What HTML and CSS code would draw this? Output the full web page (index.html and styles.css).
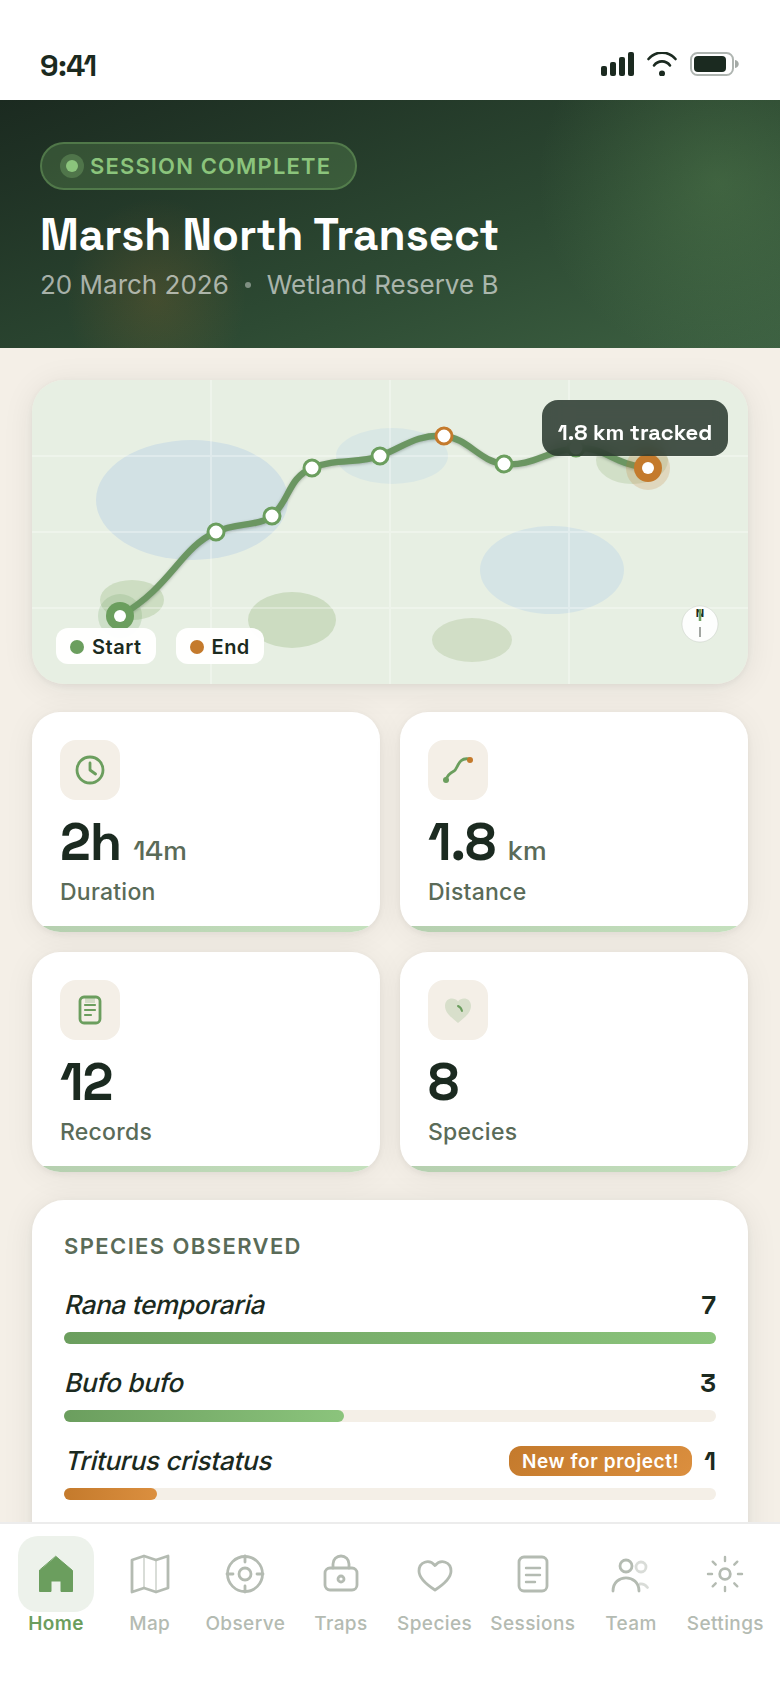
FILE: index.html
```html
<!DOCTYPE html>
<html lang="en">
<head>
    <meta charset="UTF-8">
    <meta name="viewport" content="width=device-width, initial-scale=1.0">
    <title>Marsh North Transect</title>
    <link rel="stylesheet" href="styles.css">
</head>
<body>
    <div class="phone">
        <div class="status-bar">
            <span class="time">9:41</span>
            <div class="status-icons">
                <svg width="33" height="24" viewBox="0 0 33 24" fill="#1b2a20">
                    <rect x="0" y="14" width="6" height="10" rx="2"/>
                    <rect x="9" y="10" width="6" height="14" rx="2"/>
                    <rect x="18" y="5" width="6" height="19" rx="2"/>
                    <rect x="27" y="0" width="6" height="24" rx="2"/>
                </svg>
                <svg width="30" height="24" viewBox="0 0 30 24" fill="none" stroke="#1b2a20" stroke-width="2.6" stroke-linecap="round">
                    <path d="M1.500 7C9-1.500 21-1.500 28.500 7"/>
                    <path d="M7 13.500C11 8 19 8 23 13.500"/>
                    <circle cx="15" cy="21.500" r="3" fill="#1b2a20" stroke="none"/>
                </svg>
                <svg width="50" height="24" viewBox="0 0 50 24">
                    <rect x="1" y="1" width="42" height="22" rx="6.500" fill="none" stroke="#1b2a20" stroke-opacity=".35" stroke-width="2"/>
                    <rect x="4" y="4" width="32" height="16" rx="4" fill="#1b2a20"/>
                    <path d="M45 8C50 9 50 15 45 16Z" fill="#1b2a20" fill-opacity=".4"/>
                </svg>
            </div>
        </div>

        <header class="hero">
            <div class="badge"><span class="badge-dot"></span>SESSION COMPLETE</div>
            <h1>Marsh North Transect</h1>
            <div class="meta"><span>20 March 2026</span><span class="meta-dot"></span><span>Wetland Reserve B</span></div>
        </header>

        <main class="content">
            <section class="map-card">
                <svg class="map" width="716" height="304" viewBox="0 0 716 304">
                    <rect width="716" height="304" fill="#e7efe3"/>
                    <ellipse cx="160" cy="120" rx="96" ry="60" fill="#d2e1e4"/>
                    <ellipse cx="520" cy="190" rx="72" ry="44" fill="#d5e4e5"/>
                    <ellipse cx="360" cy="76" rx="56" ry="28" fill="#d9e7e4"/>
                    <ellipse cx="100" cy="220" rx="32" ry="20" fill="#cdddc2"/>
                    <ellipse cx="260" cy="240" rx="44" ry="28" fill="#ccdcc1"/>
                    <ellipse cx="600" cy="80" rx="36" ry="24" fill="#d1dfc7"/>
                    <ellipse cx="440" cy="260" rx="40" ry="22" fill="#d1dec6"/>
                    <path d="M0 76H716M0 152H716M0 228H716M179 0V304M358 0V304M537 0V304" stroke="#fff" stroke-opacity=".3" stroke-width="2"/>
                    <path class="track" d="M88 236C140 206 148 168 184 152C204 142 226 147 240 136C258 120 256 98 280 88C304 78 326 84 348 76C370 68 384 54 412 56C436 58 448 82 472 84C500 87 516 70 544 68C572 66 580 84 616 88"/>
                    <g class="stops">
                        <circle cx="184" cy="152" r="8"/>
                        <circle cx="240" cy="136" r="8"/>
                        <circle cx="280" cy="88" r="8"/>
                        <circle cx="348" cy="76" r="8"/>
                        <circle cx="412" cy="56" r="8" stroke="#c47a2c"/>
                        <circle cx="472" cy="84" r="8"/>
                        <circle cx="544" cy="68" r="8"/>
                    </g>
                    <circle cx="88" cy="236" r="22" fill="#6b9e5e" fill-opacity=".2"/>
                    <circle cx="88" cy="236" r="14" fill="#6b9e5e"/>
                    <circle cx="88" cy="236" r="6" fill="#fff"/>
                    <circle cx="616" cy="88" r="22" fill="#c47a2c" fill-opacity=".2"/>
                    <circle cx="616" cy="88" r="14" fill="#c47a2c"/>
                    <circle cx="616" cy="88" r="6" fill="#fff"/>
                    <circle cx="668" cy="244" r="18" fill="#fff" fill-opacity=".9" stroke="#1b2a20" stroke-opacity=".1"/>
                    <text class="north" x="668" y="237" text-anchor="middle">N</text>
                    <path d="M668 229V241" stroke="#6b9e5e" stroke-width="2.500"/>
                    <path d="M668 247V257" stroke="#a2a6a2" stroke-width="2"/>
                </svg>
                <div class="tracked">1.8 km tracked</div>
                <div class="legend">
                    <span class="legend-item"><i class="dot green"></i>Start</span>
                    <span class="legend-item"><i class="dot orange"></i>End</span>
                </div>
            </section>

            <section class="stats">
                <div class="stat">
                    <div class="stat-icon">
                        <svg width="40" height="40" viewBox="0 0 40 40" class="line">
                            <circle cx="20" cy="20" r="13"/>
                            <path d="M20 13V20L25.500 24"/>
                        </svg>
                    </div>
                    <div class="stat-value">2h <small>14m</small></div>
                    <div class="stat-label">Duration</div>
                </div>
                <div class="stat">
                    <div class="stat-icon">
                        <svg width="40" height="40" viewBox="0 0 40 40" class="line">
                            <path d="M8 30C9 26 12 23 16 21C20 18.500 20 7 31 9"/>
                            <circle cx="8" cy="30" r="3" fill="#6b9e5e" stroke="none"/>
                            <circle cx="32" cy="10" r="3" fill="#c47a2c" stroke="none"/>
                        </svg>
                    </div>
                    <div class="stat-value">1.8 <small>km</small></div>
                    <div class="stat-label">Distance</div>
                </div>
                <div class="stat">
                    <div class="stat-icon">
                        <svg width="40" height="40" viewBox="0 0 40 40" class="line">
                            <rect x="15" y="7" width="10" height="6" fill="#6b9e5e" fill-opacity=".25" stroke="none"/>
                            <rect x="10" y="7" width="20" height="26" rx="4"/>
                            <path d="M15 15H25M15 20H25M15 25H21" stroke-width="2.200"/>
                        </svg>
                    </div>
                    <div class="stat-value">12</div>
                    <div class="stat-label">Records</div>
                </div>
                <div class="stat">
                    <div class="stat-icon">
                        <svg width="40" height="40" viewBox="0 0 40 40" class="line">
                            <path d="M20 33C14 28 7 23 7 16C7 8 16 6.500 20 11.500C24 6.500 33 8 33 16C33 23 26 28 20 33Z" fill="#6b9e5e" fill-opacity=".2" stroke="none"/>
                            <path d="M20 16C22 17 23.500 18.500 24 21" stroke-width="2"/>
                        </svg>
                    </div>
                    <div class="stat-value">8</div>
                    <div class="stat-label">Species</div>
                </div>
            </section>

            <section class="species-card">
                <h2>SPECIES OBSERVED</h2>
                <div class="species">
                    <div class="species-row"><em>Rana temporaria</em><b>7</b></div>
                    <div class="bar"><div class="fill" style="width: 100%"></div></div>
                </div>
                <div class="species">
                    <div class="species-row"><em>Bufo bufo</em><b>3</b></div>
                    <div class="bar"><div class="fill" style="width: 43%"></div></div>
                </div>
                <div class="species">
                    <div class="species-row"><em>Triturus cristatus</em><span class="new">New for project!</span><b>1</b></div>
                    <div class="bar"><div class="fill rare" style="width: 14.2%"></div></div>
                </div>
            </section>
        </main>

        <nav class="tabs">
            <a class="tab active">
                <span class="tab-icon"><svg width="44" height="44" viewBox="0 0 44 44"><path d="M22 4.500L38.500 18.500V39.500H27V29H17V39.500H5.500V18.500Z" fill="#6b9e5e" stroke="#6b9e5e" stroke-width="1"/></svg></span>
                Home
            </a>
            <a class="tab">
                <span class="tab-icon"><svg width="44" height="44" viewBox="0 0 44 44"><path d="M4 8L16 4L28 8L40 4V36L28 40L16 36L4 40Z"/><path d="M16 4V36M28 8V40" opacity=".5" stroke-width="2"/></svg></span>
                Map
            </a>
            <a class="tab">
                <span class="tab-icon"><svg width="44" height="44" viewBox="0 0 44 44"><circle cx="22" cy="22" r="17.500"/><circle cx="22" cy="22" r="6"/><path d="M22 4V10M22 34V40M4 22H10M34 22H40"/></svg></span>
                Observe
            </a>
            <a class="tab">
                <span class="tab-icon"><svg width="44" height="44" viewBox="0 0 44 44"><rect x="6" y="16" width="32" height="22" rx="5"/><path d="M14 16V12A8 8 0 0 1 30 12V16"/><circle cx="22" cy="27" r="3"/></svg></span>
                Traps
            </a>
            <a class="tab">
                <span class="tab-icon"><svg width="44" height="44" viewBox="0 0 44 44"><path d="M22 38C15 33.500 6 26 6 19C6 10 16 6.500 22 13.500C28 6.500 38 10 38 19C38 26 29 33.500 22 38Z"/></svg></span>
                Species
            </a>
            <a class="tab">
                <span class="tab-icon"><svg width="44" height="44" viewBox="0 0 44 44"><rect x="8" y="5" width="28" height="34" rx="5"/><path d="M15 16H29M15 23H29M15 30H24" stroke-width="2.400"/></svg></span>
                Sessions
            </a>
            <a class="tab">
                <span class="tab-icon"><svg width="44" height="44" viewBox="0 0 44 44"><circle cx="17" cy="14" r="6"/><path d="M4 39C4 21.500 30 21.500 30 39"/><g opacity=".5"><circle cx="32" cy="15" r="5"/><path d="M31 32C34 31.500 36.500 33 38.500 35.500"/></g></svg></span>
                Team
            </a>
            <a class="tab">
                <span class="tab-icon"><svg width="44" height="44" viewBox="0 0 44 44"><circle cx="22" cy="22" r="5.300"/><path d="M22 5V9M22 35V39M5 22H9M35 22H39M9.700 9.700L12.700 12.700M31.300 31.300L34.300 34.300M9.700 34.300L12.700 31.300M31.300 12.700L34.300 9.700" stroke-width="2.400"/></svg></span>
                Settings
            </a>
        </nav>
    </div>
</body>
</html>
```
FILE: styles.css
```css
* {
    box-sizing: border-box;
}
body {
    margin: 0;
    font-family: Inter, "Liberation Sans", sans-serif;
    color: #1b2a20;
    background: #f4efe7;
}
.phone {
    width: 780px;
    height: 1688px;
    display: flex;
    flex-direction: column;
    overflow: hidden;
}
h1, h2 {
    margin: 0;
}
.status-bar {
    flex: none;
    height: 100px;
    padding: 52px 40px 0;
    display: flex;
    justify-content: space-between;
    align-items: flex-start;
    background: #fff;
}
.time, h1, .stat-value, .tracked, .species-row b {
    font-family: "Space Grotesk", Inter, "Liberation Sans", sans-serif;
}
.time {
    margin-top: -5px;
    font-size: 30px;
    font-weight: 600;
    line-height: 38px;
    letter-spacing: -0.6px;
}
.status-icons {
    display: flex;
    gap: 13px;
}
.hero {
    flex: none;
    height: 248px;
    padding: 42px 40px 0;
    background:
        radial-gradient(ellipse 90px 100px at 156px 198px, rgba(196, 122, 44, .17), transparent),
        radial-gradient(circle 180px at 718px 82px, rgba(107, 158, 94, .28), transparent),
        linear-gradient(160deg, #1b2a20 0%, #2d4a33 60%, #3d6142 100%);
}
.badge {
    display: inline-flex;
    align-items: center;
    height: 48px;
    padding: 0 24px 0 24px;
    border: 2px solid rgba(107, 158, 94, .5);
    border-radius: 24px;
    background: rgba(107, 158, 94, .3);
    color: #8bc47c;
    font-size: 22px;
    font-weight: 600;
    letter-spacing: 1.15px;
}
.badge-dot {
    width: 12px;
    height: 12px;
    margin-right: 12px;
    border-radius: 50%;
    background: #8bc47c;
    box-shadow: 0 0 0 6px rgba(139, 196, 124, .3);
}
h1 {
    margin-top: 17px;
    font-size: 44px;
    line-height: 56px;
    letter-spacing: 0;
    color: #fff;
}
.meta {
    display: flex;
    align-items: center;
    margin-top: 6px;
    font-size: 26px;
    line-height: 32px;
    color: rgba(255, 255, 255, .6);
}
.meta-dot {
    width: 6px;
    height: 6px;
    margin: 0 16px;
    border-radius: 50%;
    background: rgba(255, 255, 255, .4);
}
.content {
    flex: 1;
    min-height: 0;
    padding: 32px 32px 0;
    overflow: hidden;
    display: flex;
    flex-direction: column;
    gap: 28px;
}
.map-card {
    position: relative;
    flex: none;
    height: 304px;
    border-radius: 32px;
    overflow: hidden;
    box-shadow: 0 4px 32px rgba(27, 42, 32, .08), 0 2px 6px rgba(27, 42, 32, .06);
}
.map {
    display: block;
}
.track {
    fill: none;
    stroke: #6b9662;
    stroke-width: 6.4;
    stroke-linecap: round;
    filter: drop-shadow(0 1px 1.5px rgba(27, 42, 32, .3));
}
.stops circle {
    fill: #fff;
    stroke-width: 3;
}
.stops circle:not([stroke]) {
    stroke: #6b9e5e;
}
.north {
    font-size: 11px;
    font-weight: 700;
    fill: #1b2a20;
}
.tracked {
    position: absolute;
    top: 20px;
    right: 20px;
    width: 186px;
    height: 56px;
    padding-top: 8px;
    border-radius: 16px;
    background: rgba(27, 42, 32, .8);
    backdrop-filter: blur(8px);
    color: #fff;
    font-size: 22px;
    font-weight: 600;
    line-height: 48px;
    text-align: center;
    white-space: nowrap;
}
.legend {
    position: absolute;
    left: 24px;
    bottom: 20px;
    display: flex;
    gap: 20px;
}
.legend-item {
    display: flex;
    align-items: center;
    gap: 8px;
    height: 36px;
    padding: 1px 14px 0;
    border-radius: 12px;
    background: rgba(255, 255, 255, .97);
    font-size: 20px;
    font-weight: 600;
    letter-spacing: .5px;
}
.dot {
    width: 14px;
    height: 14px;
    border-radius: 50%;
}
.green {
    background: #6b9e5e;
}
.orange {
    background: #c47a2c;
}
.stats {
    flex: none;
    display: grid;
    grid-template-columns: 1fr 1fr;
    gap: 20px;
}
.stat {
    position: relative;
    height: 220px;
    padding: 28px;
    border-radius: 28px;
    background: #fff;
    overflow: hidden;
    box-shadow: 0 4px 32px rgba(27, 42, 32, .06), 0 2px 6px rgba(27, 42, 32, .06);
}
.stat::after {
    content: "";
    position: absolute;
    left: 0;
    right: 0;
    bottom: 0;
    height: 6px;
    background: linear-gradient(90deg, #b5cfaf, #c5e1be);
}
.stat-icon {
    width: 60px;
    height: 60px;
    padding: 10px;
    border-radius: 16px;
    background: #f4efe7;
}
.stat-icon svg {
    display: block;
}
.line {
    fill: none;
    stroke: #6b9e5e;
    stroke-width: 2.8;
    stroke-linecap: round;
    stroke-linejoin: round;
}
.stat-value {
    height: 52px;
    margin-top: 16px;
    font-size: 52px;
    font-weight: 700;
    line-height: 52px;
    letter-spacing: -1px;
}
.stat-value small {
    font-size: 28px;
    font-weight: 500;
    letter-spacing: 0;
    color: #5a6b58;
}
.stat-label {
    margin-top: 9px;
    font-size: 23px;
    font-weight: 500;
    line-height: 30px;
    letter-spacing: .25px;
    color: #5a6b58;
}
.species-card {
    flex: none;
    height: 380px;
    padding: 32px;
    border-radius: 32px;
    background: #fff;
    box-shadow: 0 4px 32px rgba(27, 42, 32, .08), 0 2px 6px rgba(27, 42, 32, .06);
}
h2 {
    margin-bottom: 24px;
    font-size: 22px;
    font-weight: 600;
    line-height: 28px;
    letter-spacing: 1.4px;
    color: #5a6b58;
}
.species {
    height: 78px;
}
.species-row {
    display: flex;
    align-items: center;
    height: 40px;
    padding-top: 2px;
    font-size: 26px;
}
.species-row em {
    margin: -2px auto 0 0;
    font-style: normal;
    font-weight: 500;
    letter-spacing: -.27px;
    transform: skewX(-14deg);
    transform-origin: 0 78%;
}
.species-row b {
    font-weight: 700;
}
.new {
    height: 30px;
    margin-right: 12px;
    padding: 0 13px;
    border-radius: 12px;
    background: linear-gradient(135deg, #c47a2c, #db8f3f);
    color: #fff;
    font-size: 19px;
    font-weight: 600;
    line-height: 31px;
    letter-spacing: .6px;
}
.bar {
    height: 12px;
    margin-top: 8px;
    border-radius: 6px;
    background: #f4efe7;
}
.fill {
    height: 12px;
    border-radius: 6px;
    background: linear-gradient(90deg, #6b9e5e, #8bc47c);
}
.rare {
    background: linear-gradient(90deg, #c47a2c, #db8f3f);
}
.tabs {
    position: relative;
    flex: none;
    height: 166px;
    padding: 12px 16px 0 18px;
    border-top: 2px solid #ececec;
    display: flex;
    justify-content: space-between;
    background: #fff;
}
.tab {
    display: flex;
    flex-direction: column;
    align-items: center;
    min-width: 76px;
    font-size: 19px;
    font-weight: 500;
    line-height: 23px;
    letter-spacing: .4px;
    color: #b4bbb2;
}
.tab-icon {
    width: 76px;
    height: 76px;
    padding: 16px;
    border-radius: 20px;
}
.tab-icon svg {
    display: block;
    fill: none;
    stroke: #b4bbb2;
    stroke-width: 2.8;
    stroke-linecap: round;
    stroke-linejoin: round;
}
.active {
    font-weight: 600;
    color: #6b9e5e;
}
.active .tab-icon {
    background: #edf2eb;
}
```
